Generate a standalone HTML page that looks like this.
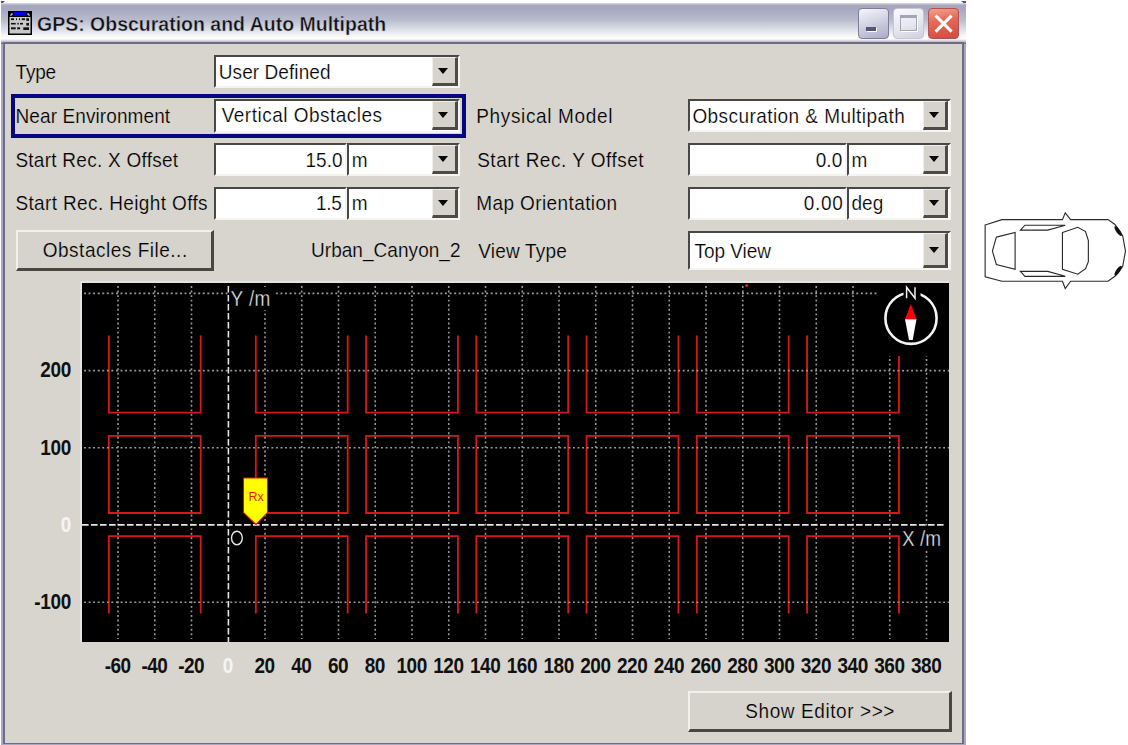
<!DOCTYPE html>
<html><head><meta charset="utf-8">
<style>
html,body{margin:0;padding:0;}
body{width:1128px;height:745px;background:#fff;position:relative;overflow:hidden;font-family:"Liberation Sans",sans-serif;}
.a{position:absolute;}
.t{position:absolute;font-size:19px;line-height:20px;color:#000;white-space:pre;transform:scaleY(1.11);-webkit-text-stroke:0.2px #d8d5cf;}
.t.w{-webkit-text-stroke-color:#fff;}
.t.b{-webkit-text-stroke-color:#d6d3cd;}
.sunk{position:absolute;background:#fff;box-sizing:border-box;border-style:solid;border-width:2px 2px 2px 2px;border-color:#484848 #f6f4f0 #f6f4f0 #484848;}
.btn{position:absolute;background:#d6d3cd;box-sizing:border-box;border-style:solid;border-width:2px 3px 3px 2px;border-color:#f2f0ec #4a4642 #4a4642 #f2f0ec;}
.dd{position:absolute;background:#d6d3cd;box-sizing:border-box;border-style:solid;border-width:1px 3px 3px 1px;border-color:#efeeea #4e4b47 #4e4b47 #efeeea;}
.dd:after{content:"";position:absolute;left:50%;top:50%;margin-left:-6px;margin-top:-2.5px;border-left:5.5px solid transparent;border-right:5.5px solid transparent;border-top:6px solid #000;}
</style></head>
<body>
<!-- window frame -->
<div class="a" style="left:1px;top:3px;width:965px;height:742px;background:#a9a8c2;"></div>
<svg class="a" style="left:0;top:0" width="1128" height="8"><path d="M1 1H5L1 5Z" fill="#55556a"/><path d="M961 1H966V5Z" fill="#55556a"/></svg>
<div class="a" style="left:1px;top:3px;width:965px;height:41px;background:linear-gradient(to bottom,#e2e2ec 0px,#aaaabe 2px,#a5a5c1 5px,#b9bccc 17px,#e6e8ef 29px,#f8f9f6 33px,#fdfdfc 36px,#b6b6c6 39px,#727089 40px,#727089 41px);"></div>
<div class="a" style="left:3px;top:42px;width:961px;height:702px;background:#6e6c84;"></div>
<div class="a" style="left:5px;top:44px;width:957px;height:699px;background:#d8d5cf;"></div>

<!-- title icon -->
<svg class="a" style="left:8px;top:11px" width="24" height="24" viewBox="0 0 24 24">
<rect x="0" y="0" width="24" height="24" fill="#000"/>
<rect x="1.5" y="6" width="21" height="16.5" fill="#c9c9c9"/>
<rect x="5.7" y="1" width="12.6" height="3.8" fill="#0000e8"/>
<path d="M2 4h2v-2M20 2v2h2" stroke="#e0e0e0" stroke-width="1" fill="none"/>
<g fill="#111">
<rect x="3" y="7.3" width="3" height="1.8"/><rect x="8" y="7.3" width="1" height="1.8"/><rect x="11" y="7.3" width="1" height="1.8"/><rect x="13.7" y="7.3" width="3.3" height="1.8"/><rect x="18.3" y="7.2" width="2.7" height="2.7"/>
<rect x="3" y="11.9" width="4.7" height="1.6"/><rect x="9.3" y="11.9" width="1.5" height="1.6"/><rect x="12" y="11.9" width="3" height="1.6"/><rect x="18.3" y="12" width="2.7" height="2.6"/>
<rect x="3" y="16.3" width="4.7" height="2"/><rect x="9.2" y="16.3" width="2.9" height="2"/><rect x="15.3" y="16.3" width="5.7" height="2.7"/>
</g>
</svg>
<div class="t" style="left:37px;top:14px;font-weight:bold;font-size:19.5px;color:#111;transform:none;-webkit-text-stroke:0.45px #c4c6d6;">GPS: Obscuration and Auto Multipath</div>

<!-- title buttons -->
<div class="a" style="left:858px;top:8px;width:31px;height:31px;box-sizing:border-box;border:1.5px solid #7d7d9a;border-radius:4px;background:linear-gradient(160deg,#f6f6fc 0%,#d4d4e4 45%,#aaaac6 100%);"></div>
<div class="a" style="left:866px;top:27px;width:10px;height:4px;background:#55557a;box-shadow:1px 1px 0 #fff;"></div>
<div class="a" style="left:893px;top:8px;width:31px;height:31px;box-sizing:border-box;border:1.5px solid #c6c6d6;border-radius:4px;background:linear-gradient(160deg,#fafafe 0%,#e8e8f0 50%,#d0d0de 100%);"></div>
<div class="a" style="left:900px;top:15px;width:17px;height:16px;box-sizing:border-box;border:1.5px solid #a4a4b4;border-top-width:3px;box-shadow:1px 1px 0 #fff;"></div>
<div class="a" style="left:928px;top:8px;width:31px;height:31px;box-sizing:border-box;border:1.5px solid #b05050;border-radius:4px;background:linear-gradient(170deg,#f4a08c 0%,#e46a58 40%,#d24a40 100%);"></div>
<svg class="a" style="left:928px;top:8px" width="31" height="31" viewBox="0 0 31 31"><path d="M7.6 7.6L23.6 23.6M23.6 7.6L7.6 23.6" stroke="#fff" stroke-width="3"/></svg>

<!-- focus rect -->
<div class="a" style="left:11px;top:94px;width:455px;height:44px;box-sizing:border-box;border:4px solid #060680;"></div>

<!-- ROWS -->
<div class="sunk" style="left:214px;top:55px;width:246px;height:33px;"></div>
<div class="dd" style="left:432px;top:57px;width:26px;height:29px;"></div>
<div class="sunk" style="left:214px;top:99px;width:246px;height:34px;"></div>
<div class="dd" style="left:432px;top:101px;width:26px;height:29px;"></div>
<div class="sunk" style="left:214px;top:143px;width:133px;height:33px;"></div>
<div class="sunk" style="left:347px;top:143px;width:113px;height:33px;"></div>
<div class="dd" style="left:432px;top:145px;width:26px;height:29px;"></div>
<div class="sunk" style="left:214px;top:187px;width:133px;height:33px;"></div>
<div class="sunk" style="left:347px;top:187px;width:113px;height:33px;"></div>
<div class="dd" style="left:432px;top:189px;width:26px;height:29px;"></div>
<div class="btn" style="left:16px;top:230px;width:198px;height:41px;"></div>
<div class="sunk" style="left:688px;top:99px;width:263px;height:33px;"></div>
<div class="dd" style="left:923px;top:101px;width:25px;height:29px;"></div>
<div class="sunk" style="left:688px;top:143px;width:159px;height:33px;"></div>
<div class="sunk" style="left:847px;top:143px;width:104px;height:33px;"></div>
<div class="dd" style="left:923px;top:145px;width:25px;height:29px;"></div>
<div class="sunk" style="left:688px;top:187px;width:159px;height:33px;"></div>
<div class="sunk" style="left:847px;top:187px;width:104px;height:33px;"></div>
<div class="dd" style="left:923px;top:189px;width:25px;height:29px;"></div>
<div class="sunk" style="left:688px;top:231px;width:263px;height:39px;"></div>
<div class="dd" style="left:923px;top:233px;width:25px;height:35px;"></div>
<div class="btn" style="left:688px;top:691px;width:264px;height:41px;"></div>
<!-- TEXTS -->
<div class="t" style="left:15.60px;top:62.70px;letter-spacing:-0.200px;transform-origin:0 16px;">Type</div>
<div class="t w" style="left:218.80px;top:62.70px;letter-spacing:0.073px;transform-origin:0 16px;">User Defined</div>
<div class="t" style="left:15.50px;top:106.50px;letter-spacing:0.100px;transform-origin:0 16px;">Near Environment</div>
<div class="t w" style="left:221.70px;top:106.40px;letter-spacing:0.488px;transform-origin:0 16px;">Vertical Obstacles</div>
<div class="t" style="left:15.40px;top:150.80px;letter-spacing:0.261px;transform-origin:0 16px;">Start Rec. X Offset</div>
<div class="t w" style="left:305.50px;top:150.70px;transform-origin:0 16px;">15.0</div>
<div class="t w" style="left:351.80px;top:150.70px;transform-origin:0 16px;">m</div>
<div class="t" style="left:15.40px;top:194.20px;letter-spacing:0.371px;transform-origin:0 16px;">Start Rec. Height Offs</div>
<div class="t w" style="left:316.10px;top:194.40px;letter-spacing:-0.300px;transform-origin:0 16px;">1.5</div>
<div class="t w" style="left:351.80px;top:194.40px;transform-origin:0 16px;">m</div>
<div class="t b" style="left:42.70px;top:240.90px;letter-spacing:0.519px;transform-origin:0 16px;">Obstacles File...</div>
<div class="t" style="left:311.00px;top:241.30px;letter-spacing:0.046px;transform-origin:0 16px;">Urban_Canyon_2</div>
<div class="t" style="left:476.20px;top:106.60px;letter-spacing:0.654px;transform-origin:0 16px;">Physical Model</div>
<div class="t w" style="left:692.40px;top:107.00px;letter-spacing:0.436px;transform-origin:0 16px;">Obscuration &amp; Multipath</div>
<div class="t" style="left:477.20px;top:150.90px;letter-spacing:0.506px;transform-origin:0 16px;">Start Rec. Y Offset</div>
<div class="t w" style="left:815.80px;top:150.80px;transform-origin:0 16px;">0.0</div>
<div class="t w" style="left:851.50px;top:150.80px;transform-origin:0 16px;">m</div>
<div class="t" style="left:476.20px;top:194.30px;letter-spacing:0.400px;transform-origin:0 16px;">Map Orientation</div>
<div class="t w" style="left:803.70px;top:194.30px;letter-spacing:0.700px;transform-origin:0 16px;">0.00</div>
<div class="t w" style="left:851.50px;top:194.30px;transform-origin:0 16px;">deg</div>
<div class="t" style="left:478.20px;top:241.90px;letter-spacing:0.200px;transform-origin:0 16px;">View Type</div>
<div class="t w" style="left:694.60px;top:241.80px;letter-spacing:-0.057px;transform-origin:0 16px;">Top View</div>
<div class="t b" style="left:745.30px;top:701.70px;letter-spacing:0.579px;transform-origin:0 16px;">Show Editor &gt;&gt;&gt;</div>
<!-- /TEXTS -->
<!-- PLOT -->
<div class="a" style="left:80px;top:281px;width:869px;height:361px;background:#e6e4df;"></div>
<svg class="a" style="left:82px;top:283px" width="867" height="359" viewBox="82 283 867 359">
<rect x="82" y="283" width="867" height="359" fill="#000"/>
<path d="M108.81 335.46V412.66H200.69V335.46M108.81 435.82H200.69V513.02H108.81ZM108.81 613.38V536.18H200.69V613.38M255.81 335.46V412.66H347.69V335.46M255.81 435.82H347.69V513.02H255.81ZM255.81 613.38V536.18H347.69V613.38M366.06 335.46V412.66H457.94V335.46M366.06 435.82H457.94V513.02H366.06ZM366.06 613.38V536.18H457.94V613.38M476.31 335.46V412.66H568.19V335.46M476.31 435.82H568.19V513.02H476.31ZM476.31 613.38V536.18H568.19V613.38M586.56 335.46V412.66H678.44V335.46M586.56 435.82H678.44V513.02H586.56ZM586.56 613.38V536.18H678.44V613.38M696.81 335.46V412.66H788.69V335.46M696.81 435.82H788.69V513.02H696.81ZM696.81 613.38V536.18H788.69V613.38M807.06 335.46V412.66H898.94V335.46M807.06 435.82H898.94V513.02H807.06ZM807.06 613.38V536.18H898.94V613.38" stroke="#d81818" stroke-width="1.8" fill="none"/>
<path d="M118.00 286V639M154.75 286V639M191.50 286V639M265.00 286V639M301.75 286V639M338.50 286V639M375.25 286V639M412.00 286V639M448.75 286V639M485.50 286V639M522.25 286V639M559.00 286V639M595.75 286V639M632.50 286V639M669.25 286V639M706.00 286V639M742.75 286V639M779.50 286V639M816.25 286V639M853.00 286V639M889.75 286V639M926.50 286V639M84 602.20H949M84 447.80H949M84 370.60H949M84 293.40H949" stroke="#9a9a9a" stroke-width="1.6" stroke-dasharray="1.9 2.67" fill="none"/>
<path d="M82 524.9H944" stroke="#e4e4e4" stroke-width="1.6" stroke-dasharray="6.6 2.4" fill="none"/>
<path d="M228.4 286V642" stroke="#e4e4e4" stroke-width="1.6" stroke-dasharray="6.6 2.4" fill="none"/>
<circle cx="746.7" cy="285.5" r="1.6" fill="#e02020"/>
<rect x="229.6" y="287" width="44" height="23" fill="#000"/>
<rect x="900" y="527" width="46" height="24" fill="#000"/>
<text transform="translate(230.5 306) scale(1 1.12)" fill="#e4e4e4" font-family="Liberation Sans" font-size="19" letter-spacing="0.4" stroke="#000" stroke-width="0.3">Y /m</text>
<text transform="translate(902 545.6) scale(1 1.12)" fill="#e4e4e4" font-family="Liberation Sans" font-size="19" letter-spacing="0" stroke="#000" stroke-width="0.3">X /m</text>
<ellipse cx="236.9" cy="538" rx="5.4" ry="6.8" stroke="#e4e4e4" stroke-width="1.4" fill="none"/>
<path d="M243.5 478H267.5V512.6L256 524.4L243.5 512.6Z" fill="#ffff00" stroke="#e01010" stroke-width="1.1"/>
<text x="248.5" y="500.5" fill="#e01818" font-family="Liberation Sans" font-size="12.5">Rx</text>
<rect x="877" y="283" width="72" height="73" fill="#000"/>
<circle cx="911" cy="318.3" r="25.6" stroke="#f4f4f4" stroke-width="2.6" fill="none"/>
<rect x="903.5" y="283" width="17" height="17" fill="#000"/>
<path d="M906.6 298.2V287.2L915 298.2V287.2" stroke="#f0f0f0" stroke-width="1.5" fill="none"/>
<path d="M910.8 304L916.5 319.2H905Z" fill="#ff0000"/>
<path d="M905 319.2H916.5L912.7 340H909Z" fill="#fff"/>
</svg>
<!-- /PLOT -->
<!-- LABELS -->
<svg class="a" style="left:0;top:0" width="1128" height="745" viewBox="0 0 1128 745">
<text transform="translate(71.00 377) scale(1 1.12)" text-anchor="end" fill="#111" font-family="Liberation Sans" font-weight="bold" font-size="19" letter-spacing="-0.3">200</text>
<text transform="translate(71.00 455) scale(1 1.12)" text-anchor="end" fill="#111" font-family="Liberation Sans" font-weight="bold" font-size="19" letter-spacing="-0.3">100</text>
<text transform="translate(71.00 532) scale(1 1.12)" text-anchor="end" fill="#f4f4f4" font-family="Liberation Sans" font-weight="bold" font-size="19" letter-spacing="-0.3">0</text>
<text transform="translate(71.00 608.6) scale(1 1.12)" text-anchor="end" fill="#111" font-family="Liberation Sans" font-weight="bold" font-size="19" letter-spacing="-0.3">-100</text>
<text transform="translate(117.60 672.8) scale(1 1.12)" text-anchor="middle" fill="#111" font-family="Liberation Sans" font-weight="bold" font-size="19" letter-spacing="-0.5">-60</text>
<text transform="translate(154.35 672.8) scale(1 1.12)" text-anchor="middle" fill="#111" font-family="Liberation Sans" font-weight="bold" font-size="19" letter-spacing="-0.5">-40</text>
<text transform="translate(191.10 672.8) scale(1 1.12)" text-anchor="middle" fill="#111" font-family="Liberation Sans" font-weight="bold" font-size="19" letter-spacing="-0.5">-20</text>
<text transform="translate(227.85 672.8) scale(1 1.12)" text-anchor="middle" fill="#f4f4f4" font-family="Liberation Sans" font-weight="bold" font-size="19" letter-spacing="-0.5">0</text>
<text transform="translate(264.60 672.8) scale(1 1.12)" text-anchor="middle" fill="#111" font-family="Liberation Sans" font-weight="bold" font-size="19" letter-spacing="-0.5">20</text>
<text transform="translate(301.35 672.8) scale(1 1.12)" text-anchor="middle" fill="#111" font-family="Liberation Sans" font-weight="bold" font-size="19" letter-spacing="-0.5">40</text>
<text transform="translate(338.10 672.8) scale(1 1.12)" text-anchor="middle" fill="#111" font-family="Liberation Sans" font-weight="bold" font-size="19" letter-spacing="-0.5">60</text>
<text transform="translate(374.85 672.8) scale(1 1.12)" text-anchor="middle" fill="#111" font-family="Liberation Sans" font-weight="bold" font-size="19" letter-spacing="-0.5">80</text>
<text transform="translate(411.60 672.8) scale(1 1.12)" text-anchor="middle" fill="#111" font-family="Liberation Sans" font-weight="bold" font-size="19" letter-spacing="-0.5">100</text>
<text transform="translate(448.35 672.8) scale(1 1.12)" text-anchor="middle" fill="#111" font-family="Liberation Sans" font-weight="bold" font-size="19" letter-spacing="-0.5">120</text>
<text transform="translate(485.10 672.8) scale(1 1.12)" text-anchor="middle" fill="#111" font-family="Liberation Sans" font-weight="bold" font-size="19" letter-spacing="-0.5">140</text>
<text transform="translate(521.85 672.8) scale(1 1.12)" text-anchor="middle" fill="#111" font-family="Liberation Sans" font-weight="bold" font-size="19" letter-spacing="-0.5">160</text>
<text transform="translate(558.60 672.8) scale(1 1.12)" text-anchor="middle" fill="#111" font-family="Liberation Sans" font-weight="bold" font-size="19" letter-spacing="-0.5">180</text>
<text transform="translate(595.35 672.8) scale(1 1.12)" text-anchor="middle" fill="#111" font-family="Liberation Sans" font-weight="bold" font-size="19" letter-spacing="-0.5">200</text>
<text transform="translate(632.10 672.8) scale(1 1.12)" text-anchor="middle" fill="#111" font-family="Liberation Sans" font-weight="bold" font-size="19" letter-spacing="-0.5">220</text>
<text transform="translate(668.85 672.8) scale(1 1.12)" text-anchor="middle" fill="#111" font-family="Liberation Sans" font-weight="bold" font-size="19" letter-spacing="-0.5">240</text>
<text transform="translate(705.60 672.8) scale(1 1.12)" text-anchor="middle" fill="#111" font-family="Liberation Sans" font-weight="bold" font-size="19" letter-spacing="-0.5">260</text>
<text transform="translate(742.35 672.8) scale(1 1.12)" text-anchor="middle" fill="#111" font-family="Liberation Sans" font-weight="bold" font-size="19" letter-spacing="-0.5">280</text>
<text transform="translate(779.10 672.8) scale(1 1.12)" text-anchor="middle" fill="#111" font-family="Liberation Sans" font-weight="bold" font-size="19" letter-spacing="-0.5">300</text>
<text transform="translate(815.85 672.8) scale(1 1.12)" text-anchor="middle" fill="#111" font-family="Liberation Sans" font-weight="bold" font-size="19" letter-spacing="-0.5">320</text>
<text transform="translate(852.60 672.8) scale(1 1.12)" text-anchor="middle" fill="#111" font-family="Liberation Sans" font-weight="bold" font-size="19" letter-spacing="-0.5">340</text>
<text transform="translate(889.35 672.8) scale(1 1.12)" text-anchor="middle" fill="#111" font-family="Liberation Sans" font-weight="bold" font-size="19" letter-spacing="-0.5">360</text>
<text transform="translate(926.10 672.8) scale(1 1.12)" text-anchor="middle" fill="#111" font-family="Liberation Sans" font-weight="bold" font-size="19" letter-spacing="-0.5">380</text>
</svg>
<!-- /LABELS -->
<!-- CAR -->
<svg class="a" style="left:970px;top:200px" width="158" height="100" viewBox="0 0 1128 714">
<g fill="none" stroke="#2a2a2a" stroke-width="8" stroke-linejoin="miter">
<path d="M108 178L228 140H660L680 92L718 140H985L1035 175L1090 255L1110 365L1090 475L1035 545L985 580H718L680 632L660 580H228L108 548Z" fill="#fff"/>
<path d="M188 265L322 232V495L188 460L160 365Z"/>
<path d="M660 232L770 195L825 225L845 290V440L825 490L770 530L660 495Z"/>
<path d="M360 215L392 180H680L555 215Z"/>
<path d="M360 510L392 545H680L555 510Z"/>
</g>
<ellipse cx="1058" cy="222" rx="14" ry="42" transform="rotate(-35 1058 222)" fill="#111"/>
<ellipse cx="1058" cy="505" rx="14" ry="42" transform="rotate(35 1058 505)" fill="#111"/>
</svg>

<!-- /CAR -->

</body></html>
